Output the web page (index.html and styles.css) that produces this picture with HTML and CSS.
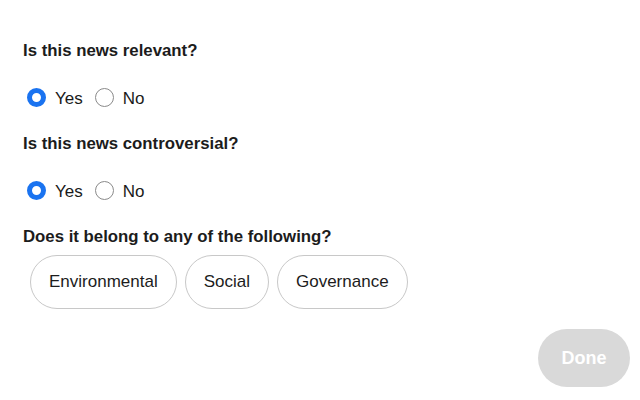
FILE: index.html
```html
<!DOCTYPE html>
<html>
<head>
<meta charset="utf-8">
<link rel="stylesheet" href="styles.css">
</head>
<body>
<div class="form">
  <div class="question">Is this news relevant?</div>
  <div class="options">
    <label class="opt"><input type="radio" name="rel" checked><span>Yes</span></label>
    <label class="opt"><input type="radio" name="rel"><span>No</span></label>
  </div>
  <div class="question">Is this news controversial?</div>
  <div class="options">
    <label class="opt"><input type="radio" name="con" checked><span>Yes</span></label>
    <label class="opt"><input type="radio" name="con"><span>No</span></label>
  </div>
  <div class="question q3">Does it belong to any of the following?</div>
  <div class="pills">
    <button class="pill">Environmental</button>
    <button class="pill">Social</button>
    <button class="pill">Governance</button>
  </div>
  <div class="footer">
    <button class="done">Done</button>
  </div>
</div>
</body>
</html>
```
FILE: styles.css
```css
html, body {
  margin: 0;
  padding: 0;
  background: #ffffff;
}
body {
  font-family: "Liberation Sans", Arial, sans-serif;
  color: #1a1a1a;
}
.form {
  padding: 41px 10px 0 23px;
  display: flex;
  flex-direction: column;
}
.question {
  font-weight: bold;
  font-size: 16.8px;
  line-height: 20px;
  height: 20px;
  color: #1c1c1c;
}
.options {
  display: flex;
  align-items: center;
  margin: 26px 0 0 4px;
  height: 20px;
  margin-bottom: 27px;
}
.opt {
  display: flex;
  align-items: center;
  font-size: 17px;
}
.opt span {
  margin-left: 9px;
  margin-right: 12px;
  position: relative;
  top: 2px;
}
.opt input {
  appearance: none;
  -webkit-appearance: none;
  margin: 0;
  width: 19px;
  height: 19px;
  border-radius: 50%;
  border: 1px solid #8a8a8a;
  background: #fff;
  box-sizing: border-box;
}
.opt input:checked {
  border: 5.5px solid #1a73f0;
  background: #fff;
}
.pills {
  display: flex;
  gap: 8px;
  margin: 8px 0 0 7px;
}
.pill {
  font-family: "Liberation Sans", Arial, sans-serif;
  font-size: 17px;
  color: #1c1c1c;
  background: #fff;
  border: 1px solid #c8c8c8;
  border-radius: 27px;
  height: 54px;
  padding: 0 18px;
}
.footer {
  display: flex;
  justify-content: flex-end;
  margin-top: 20px;
}
.done {
  font-family: "Liberation Sans", Arial, sans-serif;
  font-weight: bold;
  font-size: 18px;
  color: #fff;
  background: #d9d9d9;
  border: none;
  border-radius: 29px;
  width: 92px;
  height: 58px;
}
```
